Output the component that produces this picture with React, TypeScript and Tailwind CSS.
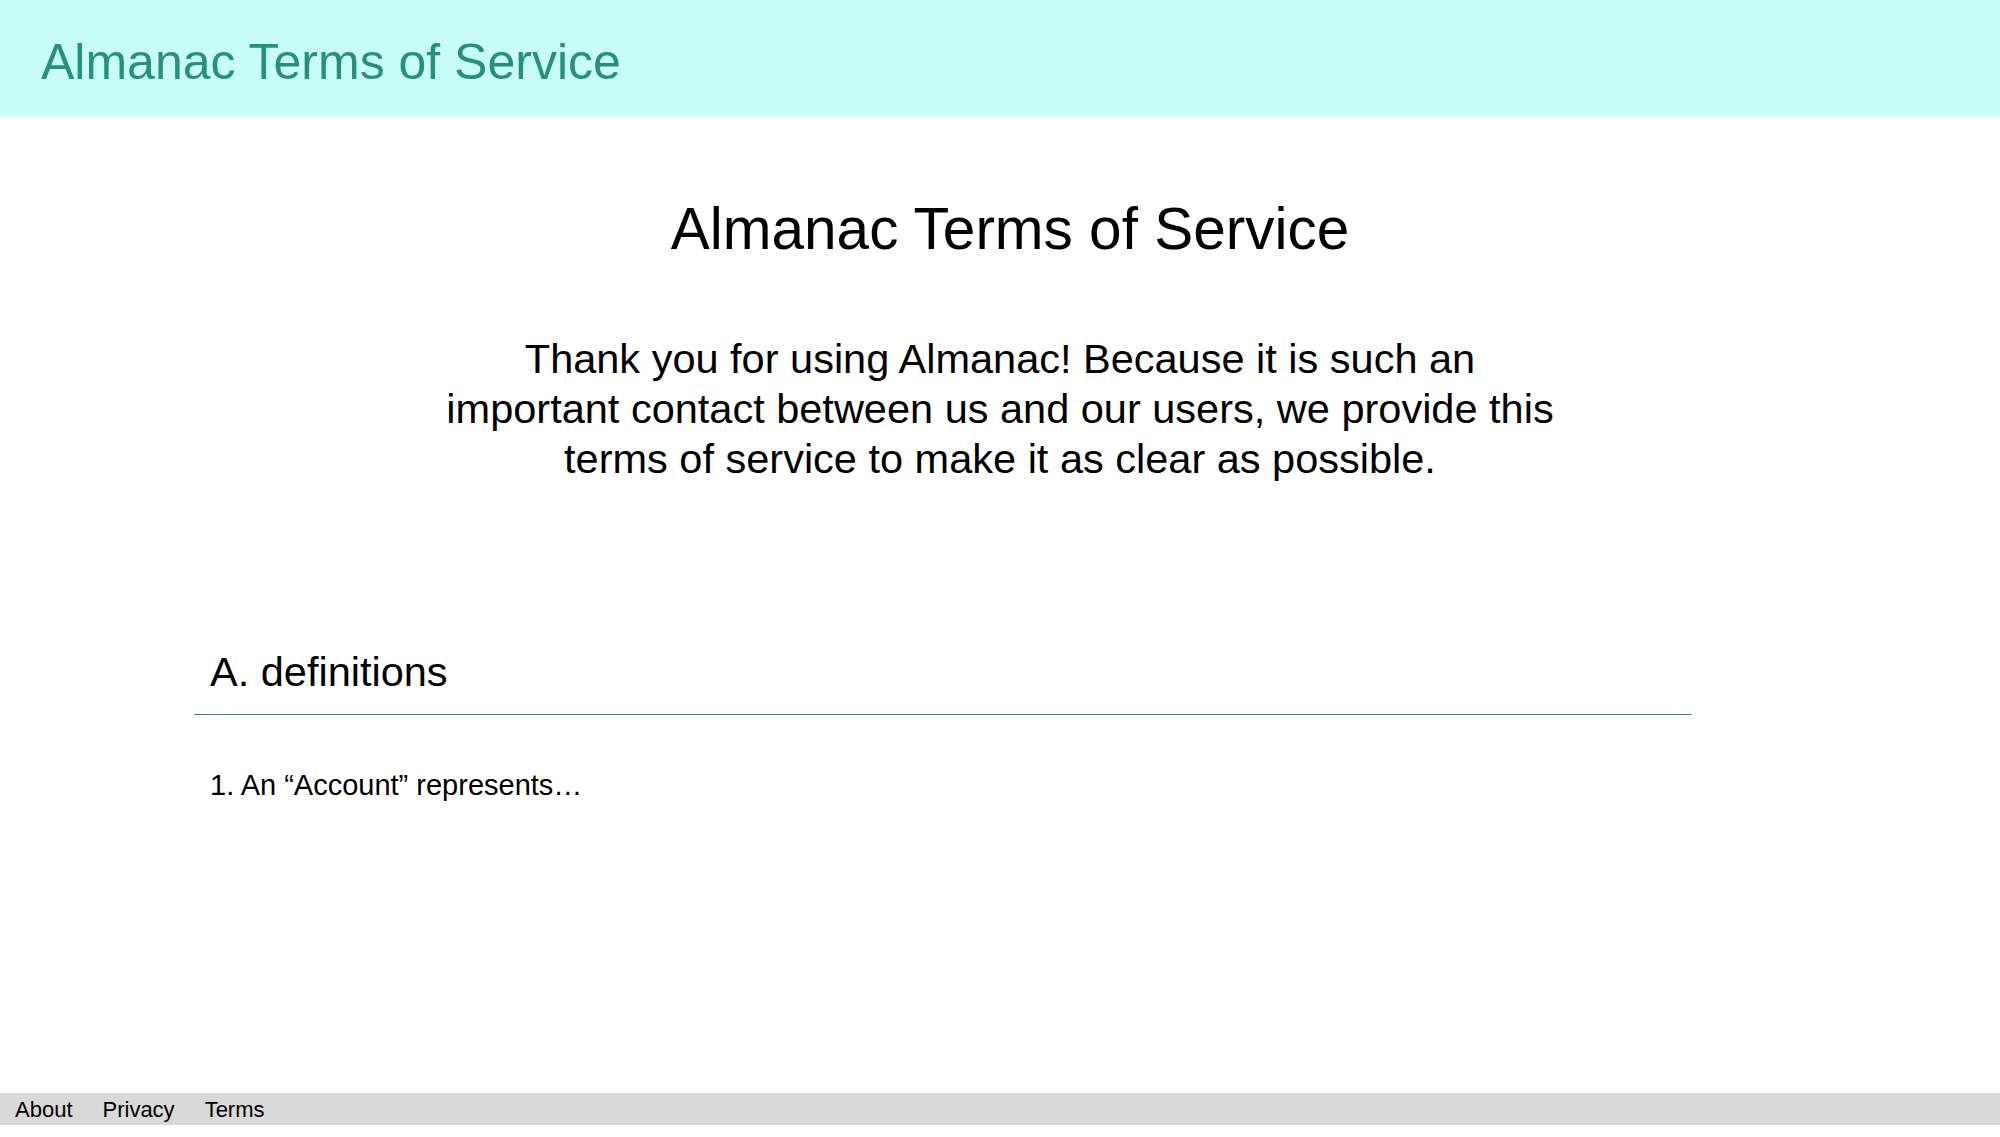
import React from 'react';

const links = ['About', 'Privacy', 'Terms'];

const App: React.FC = () => {
  return (
    <div className="flex min-h-screen flex-col bg-white font-['Liberation_Sans',Arial,sans-serif] text-black">
      {/* Top bar */}
      <header className="flex h-[117px] items-center bg-[#c7fdf6] pl-[41px]">
        <span className="pt-[6px] text-[50px] leading-none text-[#26907b]">
          Almanac Terms of Service
        </span>
      </header>

      <main className="flex flex-1 flex-col">
        <h1 className="mt-[83px] pl-5 text-center text-[58.5px] leading-[58px]">
          Almanac Terms of Service
        </h1>

        <p className="mx-auto mt-[76px] w-[1120px] text-center text-[41.5px] leading-[50px]">
          Thank you for using Almanac! Because it is such an important contact
          between us and our users, we provide this terms of service to make it
          as clear as possible.
        </p>

        <section className="ml-[194px] mt-[167px] w-[1498px]">
          <h2 className="border-b border-[#55779c] pb-[21px] pl-4 text-[41.5px] leading-[41.5px]">
            A. definitions
          </h2>
          <ol className="mt-[56px] pl-4">
            <li className="text-[29px] leading-[29px]">
              1. An “Account” represents…
            </li>
          </ol>
        </section>
      </main>

      {/* Footer links */}
      <footer className="mb-3 flex h-8 items-center bg-[#d9d9d9]">
        {links.map((label) => (
          <a
            key={label}
            href="#"
            className="px-[15px] pt-[2px] text-[22px] leading-none text-black"
          >
            {label}
          </a>
        ))}
      </footer>
    </div>
  );
};

export default App;
